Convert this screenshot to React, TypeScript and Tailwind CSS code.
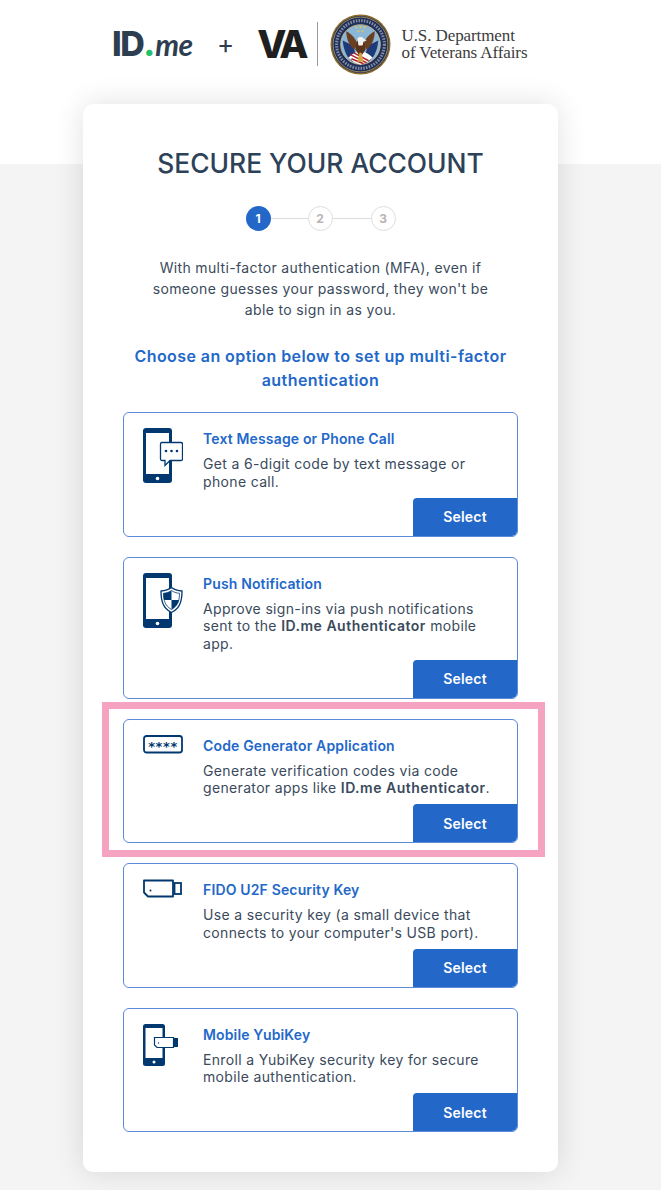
import React from "react";

const navy = "#00386f";

function PhoneBody({ h = 55, w = 29 }: { h?: number; w?: number }) {
  return (
    <>
      <rect x="0" y="0" width={w} height={h} rx="3" fill={navy} />
      <rect x="3" y="5" width={w - 6} height={h - 14} fill="#fff" />
      <circle cx={w / 2} cy={h - 4.5} r="1.8" fill="#fff" />
    </>
  );
}

function IconChat() {
  return (
    <svg width="40" height="56" viewBox="0 0 40 56" className="block">
      <PhoneBody />
      <path d="M19 14.500h19a1.500 1.500 0 0 1 1.500 1.500v15a1.500 1.500 0 0 1-1.500 1.500H27l-5 5v-5h-3a1.500 1.500 0 0 1-1.500-1.500V16a1.500 1.500 0 0 1 1.500-1.500z" fill="#fff" stroke={navy} strokeWidth="1.300" />
      <circle cx="23" cy="23" r="1.300" fill={navy} />
      <circle cx="28.500" cy="23" r="1.300" fill={navy} />
      <circle cx="34" cy="23" r="1.300" fill={navy} />
    </svg>
  );
}

function IconShield() {
  return (
    <svg width="40" height="56" viewBox="0 0 40 56" className="block">
      <PhoneBody />
      <path d="M28.500 14.500c3 2.300 6.500 3.300 10.500 3.500 0 9-1.500 17-10.500 21.500C19.500 35 18 27 18 18c4-.2 7.500-1.200 10.500-3.500z" fill="#fff" stroke={navy} strokeWidth="1.300" />
      <path d="M28.500 17.500c-2.300 1.700-4.800 2.500-8 2.800 0 2.300.1 4.600.6 6.700h7.400V17.500z" fill={navy} />
      <path d="M28.500 27h7.400c-.9 3.800-3 6.900-7.400 9.500V27z" fill={navy} />
      <path d="M28.500 17.500c2.300 1.700 4.800 2.500 8 2.800 0 6.600-1.300 12.300-8 16.200-6.700-3.900-8-9.600-8-16.200 3.200-.3 5.700-1.100 8-2.800z" fill="none" stroke={navy} strokeWidth=".8" />
    </svg>
  );
}

function IconCode() {
  return (
    <svg width="40" height="19" viewBox="0 0 40 19" className="block">
      <rect x="1" y="1" width="38" height="16.500" rx="2.500" fill="#fff" stroke={navy} strokeWidth="1.800" />
      <text x="20" y="16" textAnchor="middle" fontFamily="'DejaVu Sans', sans-serif" fontWeight="700" fontSize="13" letterSpacing="0.600" fill={navy}>****</text>
    </svg>
  );
}

function IconUsb() {
  return (
    <svg width="40" height="20" viewBox="0 0 40 20" className="block">
      <path d="M1 1.500h29v16H5l-4-4z" fill="#fff" stroke={navy} strokeWidth="1.800" strokeLinejoin="round" />
      <rect x="31.500" y="4" width="6.500" height="11" fill="#fff" stroke={navy} strokeWidth="1.800" />
      <circle cx="7.500" cy="11.500" r="1" fill={navy} />
    </svg>
  );
}

function IconMobileKey() {
  return (
    <svg width="40" height="42" viewBox="0 0 40 42" className="block">
      <rect x="0" y="0" width="22" height="42" rx="2.500" fill={navy} />
      <rect x="2.500" y="4" width="17" height="30" fill="#fff" />
      <circle cx="11" cy="38" r="1.500" fill="#fff" />
      <path d="M11.500 13.500h19v10H14l-2.500-2.500z" fill="#fff" stroke={navy} strokeWidth="1.200" />
      <rect x="30.500" y="14" width="4.500" height="9" fill={navy} />
      <circle cx="15.500" cy="19" r=".7" fill={navy} />
    </svg>
  );
}

function Seal() {
  return (
    <svg width="61" height="61" viewBox="0 0 60 60" className="block">
      <circle cx="30" cy="30" r="29.500" fill="#8b6a2e" />
      <circle cx="30" cy="30" r="28" fill="#1d2f5a" />
      <circle cx="30" cy="30" r="27" fill="none" stroke="#b59a55" strokeWidth=".8" />
      <circle cx="30" cy="30" r="19.500" fill="#8cb6d6" stroke="#d7c27f" strokeWidth=".8" />
      <circle cx="30" cy="30" r="23.500" fill="none" stroke="#c9c9d4" strokeWidth="3" strokeDasharray="1.500 1.200" opacity=".6" />
      <path d="M12.500 26l10 5 4 12-4 4c-5-3-9-10-10-21z" fill="#1f3a78" />
      <path d="M47.500 26l-10 5-4 12 4 4c5-3 9-10 10-21z" fill="#1f3a78" />
      <path d="M18 43c4-4 8-6 12-6s8 2 12 6l-5 4-7 3-7-3z" fill="#fff" />
      <path d="M20 40l16 8M23 38l15 8M21 44l12 5" stroke="#b3252e" strokeWidth="1.500" />
      <path d="M16 17c4 2 9 6 11 13l-3 5c-4-3-8-9-8-18z" fill="#6b3f21" />
      <path d="M44 17c-4 2-9 6-11 13l3 5c4-3 8-9 8-18z" fill="#6b3f21" />
      <path d="M26 28c1-3 7-3 8 0l1 7-4 6h-2l-4-6z" fill="#5a3419" />
      <path d="M27 24c1-2 5-2 6 0l3 2-3 1-1 4h-4z" fill="#f2f2f2" />
      <path d="M29 38l-2 9h6l-2-9z" fill="#d2a73b" />
      <g fill="#e8c84a">
        <circle cx="26" cy="13" r="1" />
        <circle cx="30" cy="13" r="1" />
        <circle cx="34" cy="13" r="1" />
        <circle cx="28" cy="17" r="1" />
        <circle cx="32" cy="17" r="1" />
      </g>
    </svg>
  );
}

function Step({ n, active }: { n: number; active?: boolean }) {
  return (
    <div
      className={
        active
          ? "flex h-[25px] w-[25px] items-center justify-center rounded-full bg-[#2368c9] text-[12px] font-bold text-white"
          : "flex h-[25px] w-[25px] items-center justify-center rounded-full border border-[#dedede] bg-white text-[12px] font-bold text-[#b5b5b5]"
      }
    >
      {n}
    </div>
  );
}

function Option({ icon, title, children }: { icon: React.ReactNode; title: string; children: React.ReactNode }) {
  return (
    <div className="flex flex-col rounded-[6px] border border-[#5b8ad6] bg-white">
      <div className="flex pl-[19px] pt-[15px]">
        <div className="w-[60px] shrink-0">{icon}</div>
        <div className="min-w-0 pr-[14px] pt-[1px]">
          <div className="text-[14px] font-semibold leading-[20px] tracking-[0.15px] text-[#2368c9]">{title}</div>
          <div className="mt-[6px] text-[14px] leading-[17.500px] tracking-[0.34px] text-[#3a4a5c]">{children}</div>
        </div>
      </div>
      <div className="mt-[7.500px] flex justify-end">
        <button className="flex h-[38px] w-[104px] items-center justify-center rounded-tl-[4px] rounded-br-[5px] bg-[#2368c9] text-[14px] font-semibold tracking-[0.2px] text-white">
          Select
        </button>
      </div>
    </div>
  );
}

export default function App() {
  return (
    <div className="relative h-[1190px] w-[661px] overflow-hidden bg-[#f4f4f4] font-['Inter',sans-serif]">
      <header className="h-[164px] bg-white">
        <div className="flex h-[88px] w-full items-center pl-[112px]">
          <div className="flex w-[82px] items-baseline text-[#2d3e50]">
            <span className="text-[34px] font-extrabold tracking-[-1.5px] leading-none">ID</span>
            <span className="text-[34px] font-extrabold leading-none text-[#1fc16b]">.</span>
            <span className="font-['Lato',sans-serif] text-[30px] font-bold italic leading-none tracking-[-0.5px]">me</span>
          </div>
          <span className="ml-[23px] text-[26px] font-normal leading-none text-[#2d3e50]">+</span>
          <span className="ml-[23px] text-[38px] font-extrabold leading-none tracking-[-4px] text-[#1f1f1f]">VA</span>
          <div className="ml-[12px] h-[44px] w-px bg-[#9a9a9a]" />
          <div className="ml-[12px]">
            <Seal />
          </div>
          <div className="ml-[11px] font-['Liberation_Serif',serif] text-[17px] leading-[17px] tracking-[-0.1px] text-[#3c3c3c]">
            <div>U.S. Department</div>
            <div>of Veterans Affairs</div>
          </div>
        </div>
      </header>

      <main className="relative ml-[83px] -mt-[60px] h-[1068px] w-[475px] rounded-[10px] bg-white px-[40px] pt-[41px] shadow-[0_0_30px_rgba(0,0,0,0.12)]">
        <h1 className="text-center text-[26.400px] font-medium leading-[36px] text-[#2d4258]">
          SECURE YOUR ACCOUNT
        </h1>
        <div className="mt-[25px] flex items-center justify-center">
          <Step n={1} active />
          <div className="h-px w-[37px] bg-[#dcdcdc]" />
          <Step n={2} />
          <div className="h-px w-[38px] bg-[#dcdcdc]" />
          <Step n={3} />
        </div>
        <p className="mt-[26px] px-[20px] text-center text-[14px] leading-[21px] tracking-[0.35px] text-[#3a4a5c]">
          With multi-factor authentication (MFA), even if someone guesses your password, they won't be able to sign in as you.
        </p>
        <h2 className="mt-[23.500px] text-center text-[16px] font-semibold leading-[24px] tracking-[0.42px] text-[#2368c9]">
          Choose an option below to set up multi-factor authentication
        </h2>
        <div className="mt-[20.500px] flex flex-col gap-[20px]">
          <Option icon={<IconChat />} title="Text Message or Phone Call">
            Get a 6-digit code by text message or phone call.
          </Option>
          <Option icon={<IconShield />} title="Push Notification">
            Approve sign-ins via push notifications sent to the <b className="font-semibold tracking-[0.5px]">ID.me Authenticator</b> mobile app.
          </Option>
          <Option icon={<IconCode />} title="Code Generator Application">
            Generate verification codes via code generator apps like <b className="font-semibold tracking-[0.5px]">ID.me Authenticator</b>.
          </Option>
          <Option icon={<IconUsb />} title="FIDO U2F Security Key">
            Use a security key (a small device that connects to your computer's USB port).
          </Option>
          <Option icon={<IconMobileKey />} title="Mobile YubiKey">
            Enroll a YubiKey security key for secure mobile authentication.
          </Option>
        </div>
      </main>

      <div className="pointer-events-none absolute left-[102px] top-[702px] h-[155px] w-[443px] border-[7px] border-[#f5a3c0]" />
    </div>
  );
}
